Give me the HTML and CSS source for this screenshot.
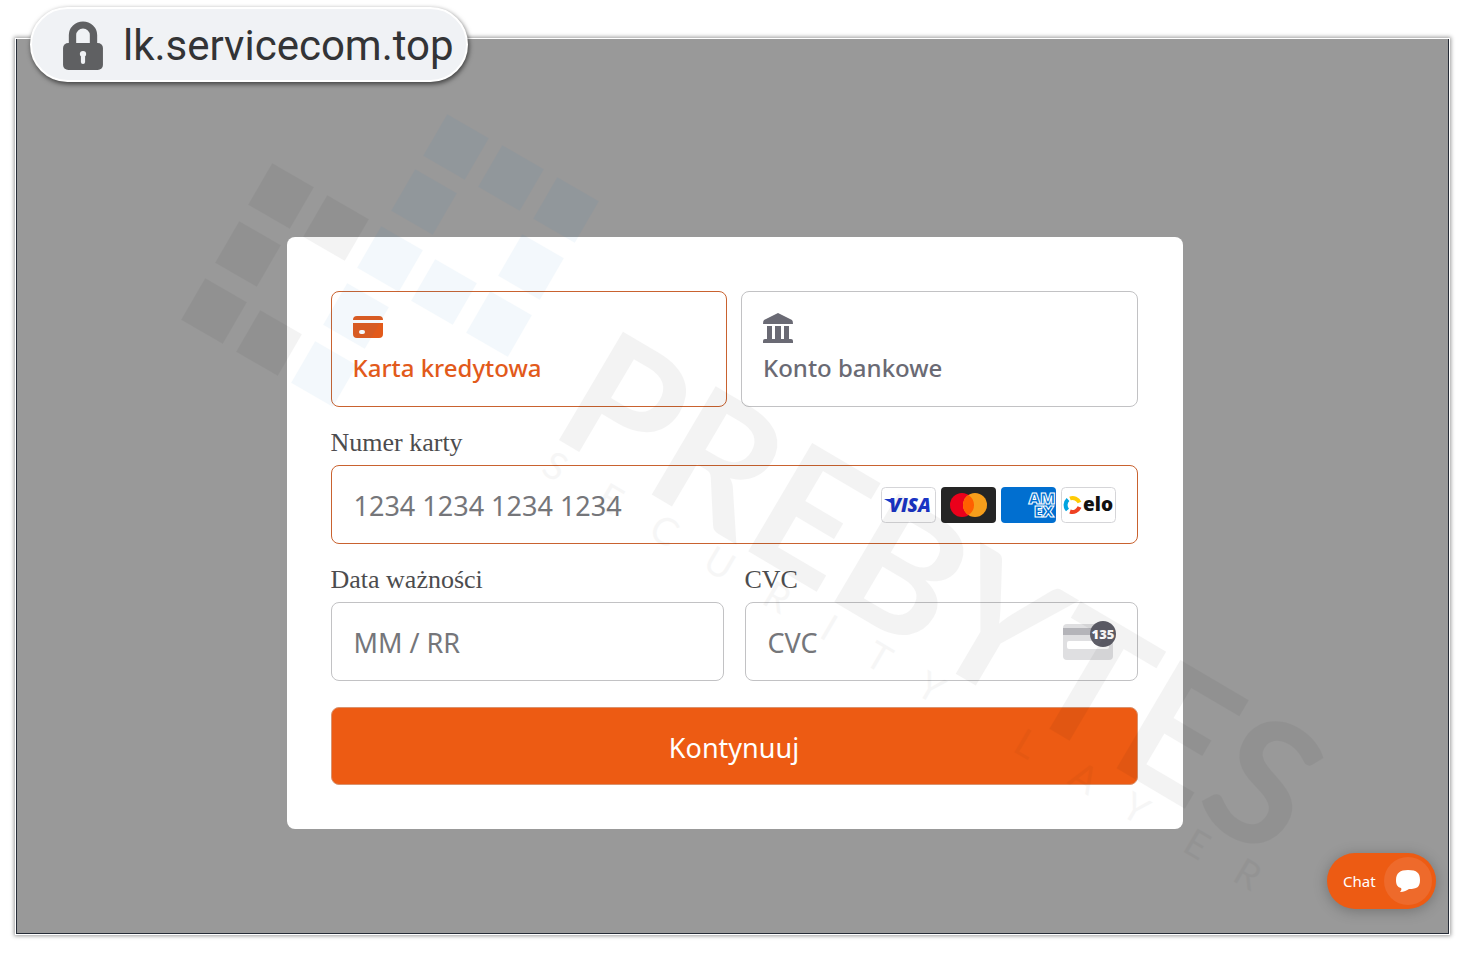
FILE: index.html
```html
<!DOCTYPE html>
<html lang="pl">
<head>
    <meta charset="utf-8">
    <title>lk.servicecom.top</title>
    <link rel="stylesheet" href="styles.css">
</head>
<body>
    <div class="frame">
        <div class="address">
            <svg class="lock" width="42" height="50" viewBox="0 0 40 50" preserveAspectRatio="none">
                <path d="M10 24V14a10 10 0 0 1 20 0v10" fill="none" stroke="#5f6062" stroke-width="7"/>
                <rect x="1" y="22" width="38" height="27" rx="5" fill="#5f6062"/>
                <circle cx="20" cy="33" r="3" fill="#f0f2f5"/>
                <rect x="18" y="34" width="4" height="9" rx="2" fill="#f0f2f5"/>
            </svg>
            <span>lk.servicecom.top</span>
        </div>

        <form class="modal">
            <div class="tabs">
                <button type="button" class="tab active">
                    <svg width="30" height="30" viewBox="0 0 30 30" fill="currentColor">
                        <path d="M0 7a4 4 0 0 1 4-4h22a4 4 0 0 1 4 4z"/>
                        <path fill-rule="evenodd" d="M0 10h30v11a4 4 0 0 1-4 4H4a4 4 0 0 1-4-4zM8 17a2 2 0 0 0 0 4h2a2 2 0 0 0 0-4z"/>
                    </svg>
                    Karta kredytowa
                </button>
                <button type="button" class="tab">
                    <svg width="30" height="30" viewBox="0 0 30 30" fill="currentColor">
                        <path d="M15 0l14 7q1 1 1 4H0q0-3 1-4z"/>
                        <path d="M4 13h5v13H4zM12 13h6v13h-6zM21 13h5v13h-5z"/>
                        <path d="M0 30v-2q0-2 2-2h26q2 0 2 2v2z"/>
                    </svg>
                    Konto bankowe
                </button>
            </div>

            <label for="number">Numer karty</label>
            <div class="field active">
                <input id="number" type="text" placeholder="1234 1234 1234 1234">
                <div class="brands">
                    <svg width="55" height="36" viewBox="0 0 55 36">
                        <rect x=".5" y=".5" width="54" height="35" rx="4" fill="#fff" stroke="#d5d5d8"/>
                        <path d="M3 12h7l2 5z" fill="#1a34c4"/>
                        <text x="29" y="25" class="visa">VISA</text>
                    </svg>
                    <svg width="55" height="36" viewBox="0 0 55 36">
                        <rect width="55" height="36" rx="4" fill="#252525"/>
                        <circle cx="21" cy="18" r="12" fill="#eb001b"/>
                        <circle cx="34" cy="18" r="12" fill="#f79e1b"/>
                        <path d="M27.500 7.900a12 12 0 0 1 0 20.200a12 12 0 0 1 0-20.200z" fill="#ff5f00"/>
                    </svg>
                    <svg width="55" height="36" viewBox="0 0 55 36">
                        <rect width="55" height="36" rx="4" fill="#016fd0"/>
                        <text class="amex"><tspan x="41" y="17">AM</tspan><tspan x="43" y="30">EX</tspan></text>
                    </svg>
                    <svg width="55" height="36" viewBox="0 0 55 36">
                        <rect x=".5" y=".5" width="54" height="35" rx="4" fill="#fff" stroke="#d5d5d8"/>
                        <g fill="none" stroke-width="4">
                            <path d="M9 11.500a7.500 7.500 0 0 1 9.500 4" stroke="#ffcb05"/>
                            <path d="M7 12.500a7.500 7.500 0 0 0-.500 10.500" stroke="#00a4e0"/>
                            <path d="M9 24.500a7.500 7.500 0 0 0 9.500-4.500" stroke="#ef4123"/>
                        </g>
                        <text x="37" y="24" class="elo">elo</text>
                    </svg>
                </div>
            </div>

            <div class="row">
                <div>
                    <label for="expiry">Data ważności</label>
                    <div class="field">
                        <input id="expiry" type="text" placeholder="MM / RR">
                    </div>
                </div>
                <div>
                    <label for="cvc">CVC</label>
                    <div class="field">
                        <input id="cvc" type="text" placeholder="CVC">
                        <svg width="54" height="42" viewBox="0 0 54 42">
                            <rect x="1" y="3" width="50" height="36" rx="4" fill="#dfdfe1"/>
                            <rect x="1" y="7" width="50" height="7" fill="#b4b4b9"/>
                            <rect x="5" y="20" width="42" height="8" rx="2" fill="#fff"/>
                            <circle cx="41" cy="13" r="13" fill="#5e5e68"/>
                            <text x="41" y="18" class="digits">135</text>
                        </svg>
                    </div>
                </div>
            </div>

            <button type="button" class="submit">Kontynuuj</button>
        </form>

        <button type="button" class="chat">
            Chat
            <span class="bubble">
                <svg width="26" height="24" viewBox="0 0 26 24" fill="#fff">
                    <path d="M13 1C22 1 25 4 25 11s-3 9-11 9c-2 1-5 3-9 3 1-1 2-3 1-4-4-1-5-4-5-8C1 4 5 1 13 1z"/>
                </svg>
            </span>
        </button>
    </div>

    <!-- watermark -->
    <svg class="watermark" width="1400" height="920" viewBox="0 0 1400 920" aria-hidden="true">
        <defs>
            <rect id="tile" x="-24" y="-24" width="48" height="48" transform="rotate(30)"/>
        </defs>
        <g fill="#000">
            <use href="#tile" x="281" y="196"/>
            <use href="#tile" x="336" y="228"/>
            <use href="#tile" x="248" y="254"/>
            <use href="#tile" x="214" y="311"/>
            <use href="#tile" x="269" y="343"/>
        </g>
        <g fill="#0078c8">
            <use href="#tile" x="456" y="147"/>
            <use href="#tile" x="511" y="178"/>
            <use href="#tile" x="566" y="210"/>
            <use href="#tile" x="424" y="202"/>
            <use href="#tile" x="390" y="259"/>
            <use href="#tile" x="444" y="292"/>
            <use href="#tile" x="531" y="267"/>
            <use href="#tile" x="499" y="324"/>
            <use href="#tile" x="356" y="316"/>
            <use href="#tile" x="324" y="374"/>
        </g>
        <g transform="translate(559 440) rotate(30.500)">
            <text class="mark" x="-14" y="0">PREBYTES</text>
            <text class="submark" y="38" x="10 74 137 201 268 328 386 446">SECURITY</text>
            <text class="submark" y="38" x="557 624 684 755 814">LAYER</text>
        </g>
    </svg>
</body>
</html>
```

FILE: styles.css
```css
* {
    box-sizing: border-box;
}

body {
    margin: 0;
    padding: 39px 20px 19px 16px;
    background: #fff;
    font-family: "Noto Sans", sans-serif;
}

button,
input {
    font-family: inherit;
}

.frame {
    position: relative;
    min-height: calc(100vh - 58px);
    padding: 198px 20px 104px 24px;
    background: #999;
    border: 1px solid #252b36;
    border-top: none;
    box-shadow: 0 0 0 1px #fff, 0 0 4px 2px rgba(0, 0, 0, 0.4);
}

.address {
    position: absolute;
    top: -32px;
    left: 13px;
    display: flex;
    align-items: center;
    gap: 19px;
    width: 438px;
    height: 75px;
    padding: 2px 0 0 30px;
    background: #f0f2f5;
    border: 2px solid #fff;
    border-radius: 38px;
    box-shadow: 1px 2px 5px rgba(0, 0, 0, 0.6);
    color: #333436;
    font-family: Roboto, sans-serif;
    font-size: 42px;
    line-height: 60px;
}

.modal {
    max-width: 896px;
    margin: 0 auto;
    padding: 54px 45px 44px 44px;
    background: #fff;
    border-radius: 8px;
}

.tabs {
    display: grid;
    grid-template-columns: 1fr 1fr;
    gap: 14px;
}

.tab {
    display: flex;
    flex-direction: column;
    gap: 10px;
    height: 116px;
    padding: 21px;
    background: none;
    border: 1px solid #c2c2c4;
    border-radius: 8px;
    color: #6a6a74;
    font-size: 24px;
    font-weight: 500;
    line-height: 30px;
    text-align: left;
}

.tab.active {
    border-color: #c9622f;
    color: #e25a1b;
}

label {
    display: block;
    padding: 21px 0 7px;
    color: #4c4c4e;
    font-family: "Liberation Serif", serif;
    font-size: 26px;
    line-height: 30px;
}

.field {
    display: flex;
    align-items: center;
    height: 79px;
    padding: 0 21px 0 22px;
    border: 1px solid #c2c2c4;
    border-radius: 8px;
}

.field.active {
    border-color: #c9622f;
}

.field input {
    flex: 1;
    min-width: 0;
    height: 60px;
    padding: 2px 0 0;
    background: none;
    border: none;
    outline: none;
    font-size: 27px;
}

.field input::placeholder {
    color: #75767a;
    opacity: 1;
}

.brands {
    display: flex;
    gap: 5px;
}

.row {
    display: grid;
    grid-template-columns: minmax(0, 1fr) minmax(0, 1fr);
    gap: 21px;
}

.submit {
    display: block;
    width: 100%;
    height: 78px;
    margin-top: 26px;
    padding: 2px 0 0;
    background: #ed5b13;
    border: 1px solid #d9936f;
    border-radius: 8px;
    color: #fff;
    font-size: 27px;
}

.chat {
    position: absolute;
    right: 12px;
    bottom: 24px;
    display: flex;
    align-items: center;
    justify-content: space-between;
    width: 109px;
    height: 56px;
    padding: 0 4px 0 16px;
    background: #ed5b13;
    border: none;
    border-radius: 28px;
    box-shadow: 0 2px 14px rgba(0, 0, 0, 0.25);
    color: #fff;
    font-size: 15px;
}

.bubble {
    display: grid;
    place-items: center;
    width: 48px;
    height: 48px;
    background: #ee6a2b;
    border-radius: 50%;
}

.visa,
.amex,
.elo,
.digits {
    font-family: "Open Sans", sans-serif;
    font-weight: 800;
    text-anchor: middle;
}

.visa {
    fill: #1a34c4;
    font-size: 19px;
    font-style: italic;
}

.amex {
    fill: #016fd0;
    stroke: #fff;
    stroke-width: 1px;
    font-size: 16px;
}

.elo {
    fill: #111;
    font-size: 19px;
}

.digits {
    fill: #fff;
    font-size: 13px;
}

.watermark {
    position: absolute;
    top: 0;
    left: 0;
    opacity: 0.045;
    pointer-events: none;
}

.mark {
    font-family: Lato, sans-serif;
    font-size: 174px;
    font-weight: 700;
}

.submark {
    font-family: Lato, sans-serif;
    font-size: 38px;
    opacity: 0.7;
    text-anchor: middle;
}
```
